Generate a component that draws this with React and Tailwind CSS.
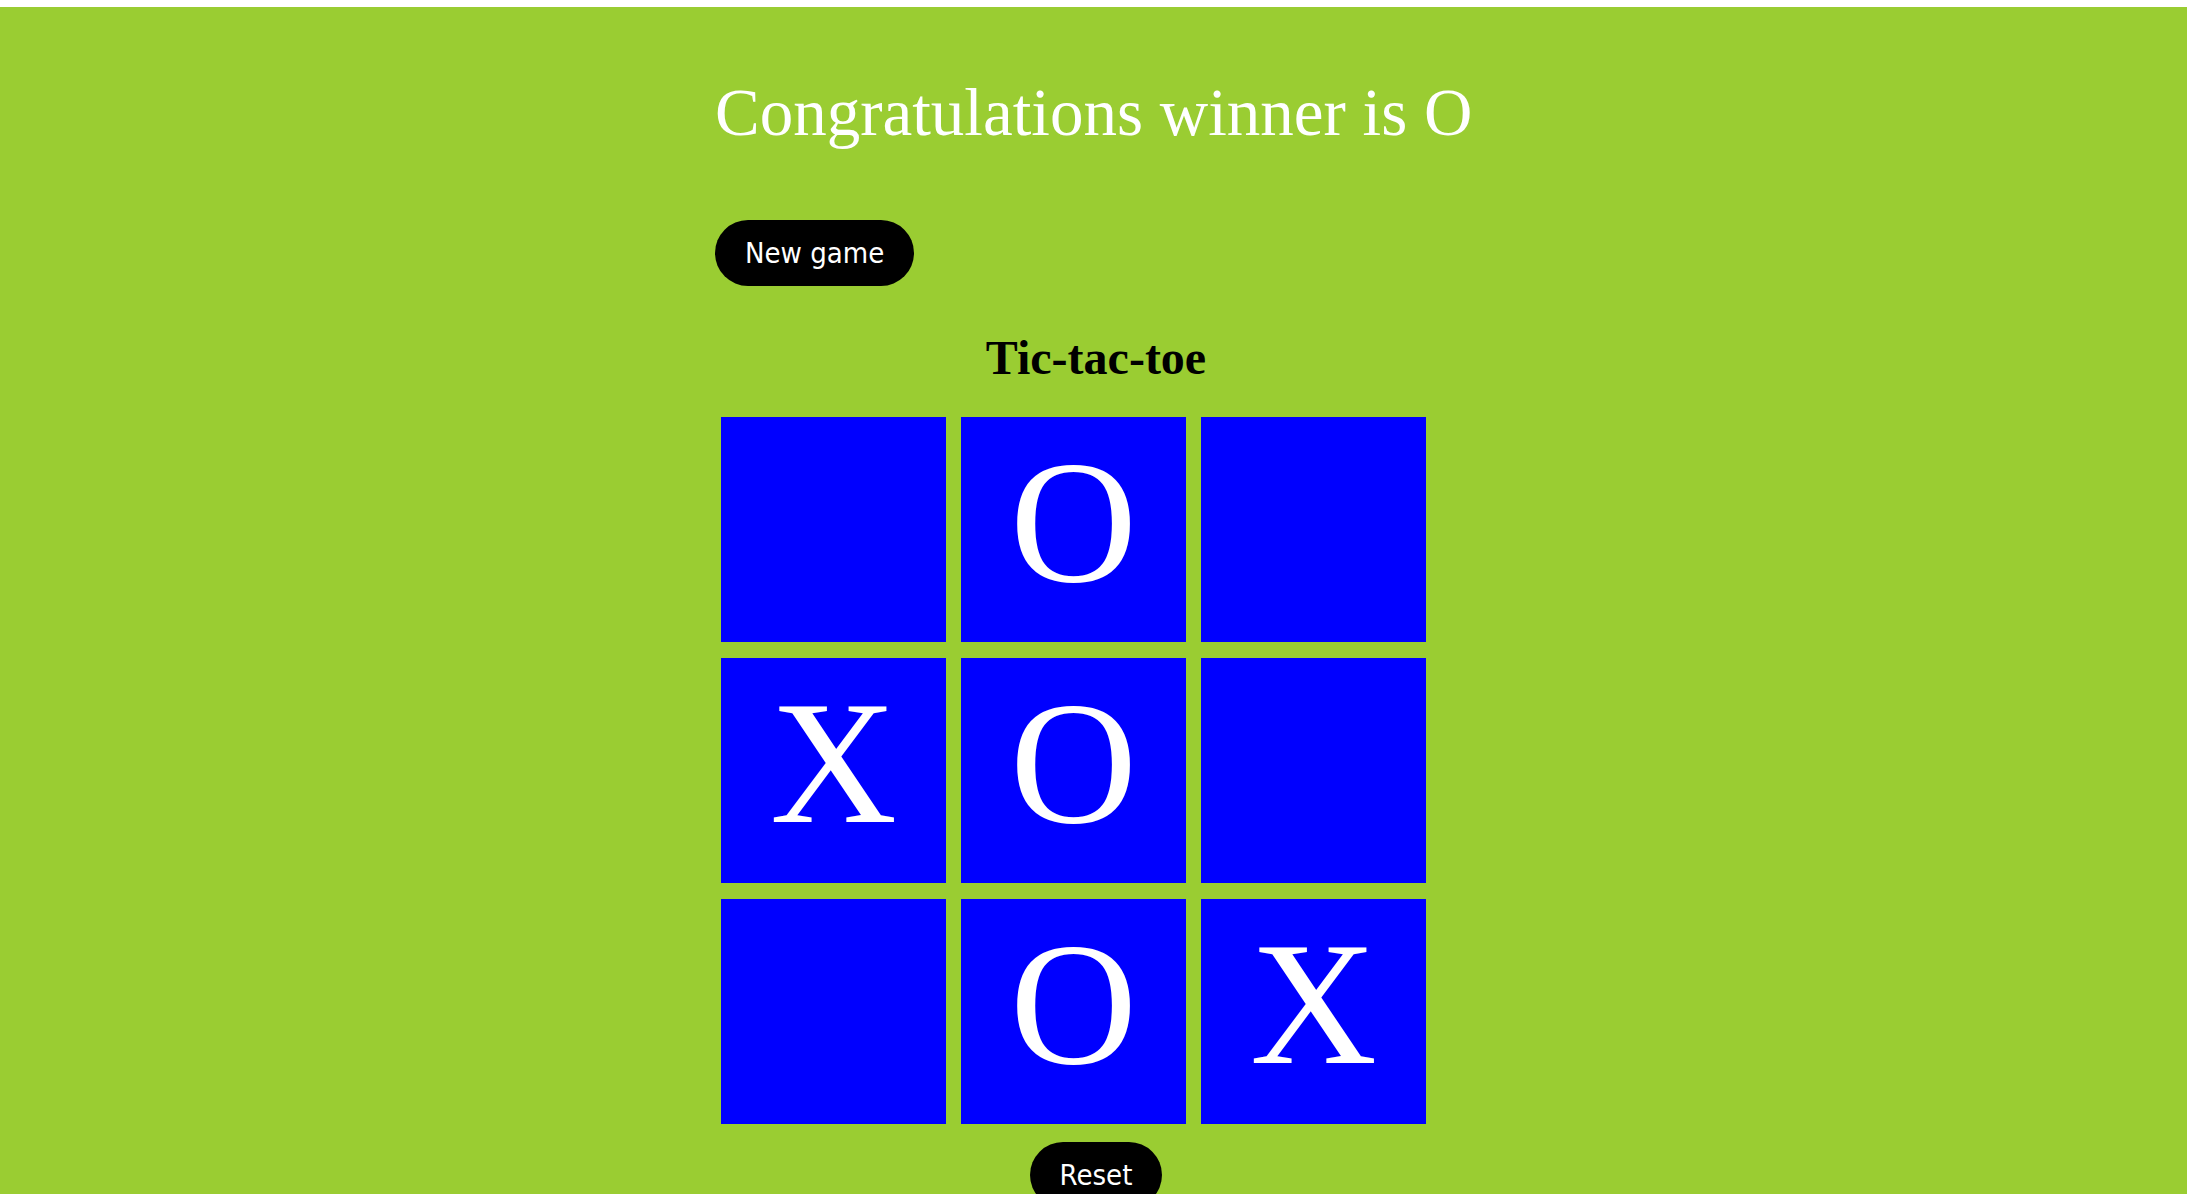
export default function App() {
  const board = ["", "O", "", "X", "O", "", "", "O", "X"];
  return (
    <div className="min-h-screen bg-white pt-[7px]">
      <div className="min-h-[1187px] bg-[#9acd32]">
        <div className="mx-auto flex w-[767px] flex-col items-start pl-[5px] pt-[72px]">
          <h1 className="whitespace-nowrap font-['Liberation_Serif',serif] text-[67px] font-normal leading-none text-white">
            Congratulations winner is O
          </h1>
          <button className="mt-[74px] flex h-[66px] items-center rounded-full bg-black px-[30px] font-['DejaVu_Sans',sans-serif] font-stretch-condensed text-[29px] leading-none text-white">
            New game
          </button>
          <h2 className="mt-[48px] self-center font-['Liberation_Serif',serif] text-[48px] font-bold leading-none text-black">
            Tic-tac-toe
          </h2>
          <div className="ml-[6px] mt-[35px] grid grid-cols-[repeat(3,225px)] gap-x-[15px] gap-y-4">
            {board.map((v, i) => (
              <div
                key={i}
                className="flex h-[225px] items-center justify-center bg-[#0000ff] pb-[16px] font-['Liberation_Serif',serif] text-[176px] leading-none text-white"
              >
                {v}
              </div>
            ))}
          </div>
          <button className="mt-[18px] flex h-[66px] items-center self-center rounded-full bg-black px-[30px] font-['DejaVu_Sans',sans-serif] font-stretch-condensed text-[29px] leading-none text-white">
            Reset
          </button>
        </div>
      </div>
    </div>
  );
}
